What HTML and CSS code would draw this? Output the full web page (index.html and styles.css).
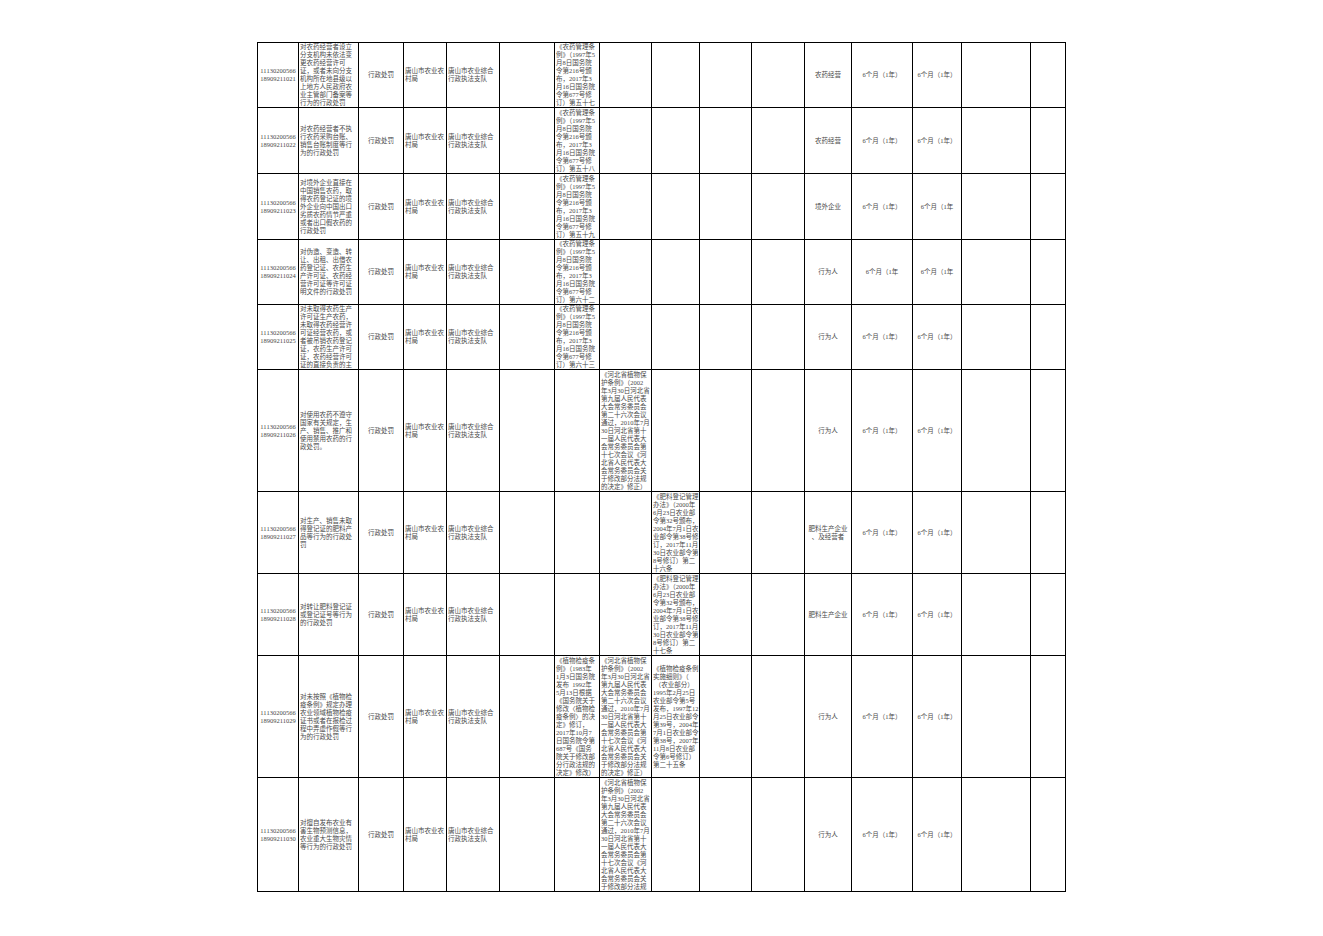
FILE: index.html
```html
<!DOCTYPE html>
<html lang="zh-CN">
<head>
<meta charset="utf-8">
<title>行政处罚事项表</title>
<link rel="stylesheet" href="styles.css">
</head>
<body>
<table class="sheet">
<colgroup>
<col class="w1"><col class="w2"><col class="w3"><col class="w4"><col class="w5"><col class="w6"><col class="w7"><col class="w8"><col class="w9"><col class="w10"><col class="w11"><col class="w12"><col class="w13"><col class="w14"><col class="w15"><col class="w16">
</colgroup>
<tbody>
<tr class="r1">
<td class="m">11130200566<br>18909211021</td>
<td class="l">对农药经营者设立<br>分支机构未依法变<br>更农药经营许可<br>证，或者未向分支<br>机构所在地县级以<br>上地方人民政府农<br>业主管部门备案等<br>行为的行政处罚</td>
<td class="m">行政处罚</td>
<td class="l">唐山市农业农<br>村局</td>
<td class="l">唐山市农业综合<br>行政执法支队</td>
<td></td>
<td class="l">《农药管理条<br>例》（1997年5<br>月8日国务院<br>令第216号颁<br>布，2017年3<br>月16日国务院<br>令第677号修<br>订）第五十七</td>
<td></td><td></td><td></td><td></td>
<td class="m">农药经营</td>
<td class="m">6个月（1年）</td>
<td class="m">6个月（1年）</td>
<td></td><td></td>
</tr>
<tr class="r2">
<td class="m">11130200566<br>18909211022</td>
<td class="l">对农药经营者不执<br>行农药采购台账、<br>销售台账制度等行<br>为的行政处罚</td>
<td class="m">行政处罚</td>
<td class="l">唐山市农业农<br>村局</td>
<td class="l">唐山市农业综合<br>行政执法支队</td>
<td></td>
<td class="l">《农药管理条<br>例》（1997年5<br>月8日国务院<br>令第216号颁<br>布，2017年3<br>月16日国务院<br>令第677号修<br>订）第五十八</td>
<td></td><td></td><td></td><td></td>
<td class="m">农药经营</td>
<td class="m">6个月（1年）</td>
<td class="m">6个月（1年）</td>
<td></td><td></td>
</tr>
<tr class="r3">
<td class="m">11130200566<br>18909211023</td>
<td class="l">对境外企业直接在<br>中国销售农药，取<br>得农药登记证的境<br>外企业向中国出口<br>劣质农药情节严重<br>或者出口假农药的<br>行政处罚</td>
<td class="m">行政处罚</td>
<td class="l">唐山市农业农<br>村局</td>
<td class="l">唐山市农业综合<br>行政执法支队</td>
<td></td>
<td class="l">《农药管理条<br>例》（1997年5<br>月8日国务院<br>令第216号颁<br>布，2017年3<br>月16日国务院<br>令第677号修<br>订）第五十九</td>
<td></td><td></td><td></td><td></td>
<td class="m">境外企业</td>
<td class="m">6个月（1年）</td>
<td class="m">6个月（1年</td>
<td></td><td></td>
</tr>
<tr class="r4">
<td class="m">11130200566<br>18909211024</td>
<td class="l">对伪造、变造、转<br>让、出租、出借农<br>药登记证、农药生<br>产许可证、农药经<br>营许可证等许可证<br>明文件的行政处罚</td>
<td class="m">行政处罚</td>
<td class="l">唐山市农业农<br>村局</td>
<td class="l">唐山市农业综合<br>行政执法支队</td>
<td></td>
<td class="l">《农药管理条<br>例》（1997年5<br>月8日国务院<br>令第216号颁<br>布，2017年3<br>月16日国务院<br>令第677号修<br>订）第六十二</td>
<td></td><td></td><td></td><td></td>
<td class="m">行为人</td>
<td class="m">6个月（1年</td>
<td class="m">6个月（1年</td>
<td></td><td></td>
</tr>
<tr class="r5">
<td class="m">11130200566<br>18909211025</td>
<td class="l">对未取得农药生产<br>许可证生产农药，<br>未取得农药经营许<br>可证经营农药，或<br>者被吊销农药登记<br>证，农药生产许可<br>证，农药经营许可<br>证的直接负责的主</td>
<td class="m">行政处罚</td>
<td class="l">唐山市农业农<br>村局</td>
<td class="l">唐山市农业综合<br>行政执法支队</td>
<td></td>
<td class="l">《农药管理条<br>例》（1997年5<br>月8日国务院<br>令第216号颁<br>布，2017年3<br>月16日国务院<br>令第677号修<br>订）第六十三</td>
<td></td><td></td><td></td><td></td>
<td class="m">行为人</td>
<td class="m">6个月（1年）</td>
<td class="m">6个月（1年）</td>
<td></td><td></td>
</tr>
<tr class="r6">
<td class="m">11130200566<br>18909211026</td>
<td class="l">对使用农药不遵守<br>国家有关规定，生<br>产、销售、推广和<br>使用禁用农药的行<br>政处罚。</td>
<td class="m">行政处罚</td>
<td class="l">唐山市农业农<br>村局</td>
<td class="l">唐山市农业综合<br>行政执法支队</td>
<td></td>
<td></td>
<td class="l">《河北省植物保<br>护条例》（2002<br>年3月30日河北省<br>第九届人民代表<br>大会常务委员会<br>第二十六次会议<br>通过，2010年7月<br>30日河北省第十<br>一届人民代表大<br>会常务委员会第<br>十七次会议《河<br>北省人民代表大<br>会常务委员会关<br>于修改部分法规<br>的决定》修正）</td>
<td></td><td></td><td></td>
<td class="m">行为人</td>
<td class="m">6个月（1年）</td>
<td class="m">6个月（1年）</td>
<td></td><td></td>
</tr>
<tr class="r7">
<td class="m">11130200566<br>18909211027</td>
<td class="l">对生产、销售未取<br>得登记证的肥料产<br>品等行为的行政处<br>罚</td>
<td class="m">行政处罚</td>
<td class="l">唐山市农业农<br>村局</td>
<td class="l">唐山市农业综合<br>行政执法支队</td>
<td></td><td></td><td></td>
<td class="l">《肥料登记管理<br>办法》（2000年<br>6月23日农业部<br>令第32号颁布，<br>2004年7月1日农<br>业部令第38号修<br>订，2017年11月<br>30日农业部令第<br>8号修订）第二<br>十六条</td>
<td></td><td></td>
<td class="m">肥料生产企业<br>、及经营者</td>
<td class="m">6个月（1年）</td>
<td class="m">6个月（1年）</td>
<td></td><td></td>
</tr>
<tr class="r8">
<td class="m">11130200566<br>18909211028</td>
<td class="l">对转让肥料登记证<br>或登记证号等行为<br>的行政处罚</td>
<td class="m">行政处罚</td>
<td class="l">唐山市农业农<br>村局</td>
<td class="l">唐山市农业综合<br>行政执法支队</td>
<td></td><td></td><td></td>
<td class="l">《肥料登记管理<br>办法》（2000年<br>6月23日农业部<br>令第32号颁布，<br>2004年7月1日农<br>业部令第38号修<br>订，2017年11月<br>30日农业部令第<br>8号修订）第二<br>十七条</td>
<td></td><td></td>
<td class="m">肥料生产企业</td>
<td class="m">6个月（1年）</td>
<td class="m">6个月（1年）</td>
<td></td><td></td>
</tr>
<tr class="r9">
<td class="m">11130200566<br>18909211029</td>
<td class="l">对未按照《植物检<br>疫条例》规定办理<br>农业领域植物检疫<br>证书或者在报检过<br>程中弄虚作假等行<br>为的行政处罚</td>
<td class="m">行政处罚</td>
<td class="l">唐山市农业农<br>村局</td>
<td class="l">唐山市农业综合<br>行政执法支队</td>
<td></td>
<td class="l">《植物检疫条<br>例》（1983年<br>1月3日国务院<br>发布&nbsp;&nbsp;1992年<br>5月13日根据<br>《国务院关于<br>修改〈植物检<br>疫条例〉的决<br>定》修订，<br>2017年10月7<br>日国务院令第<br>687号《国务<br>院关于修改部<br>分行政法规的<br>决定》修改）</td>
<td class="l">《河北省植物保<br>护条例》（2002<br>年3月30日河北省<br>第九届人民代表<br>大会常务委员会<br>第二十六次会议<br>通过，2010年7月<br>30日河北省第十<br>一届人民代表大<br>会常务委员会第<br>十七次会议《河<br>北省人民代表大<br>会常务委员会关<br>于修改部分法规<br>的决定》修正）</td>
<td class="l">《植物检疫条例<br>实施细则》（<br>&nbsp;（农业部分）<br>1995年2月25日<br>农业部令第5号<br>发布，1997年12<br>月25日农业部令<br>第39号，2004年<br>7月1日农业部令<br>第38号，2007年<br>11月8日农业部<br>令第6号修订）<br>第二十五条</td>
<td></td><td></td>
<td class="m">行为人</td>
<td class="m">6个月（1年）</td>
<td class="m">6个月（1年）</td>
<td></td><td></td>
</tr>
<tr class="r10">
<td class="m">11130200566<br>18909211030</td>
<td class="l">对擅自发布农业有<br>害生物预测信息，<br>农业重大生物灾情<br>等行为的行政处罚</td>
<td class="m">行政处罚</td>
<td class="l">唐山市农业农<br>村局</td>
<td class="l">唐山市农业综合<br>行政执法支队</td>
<td></td>
<td></td>
<td class="l">《河北省植物保<br>护条例》（2002<br>年3月30日河北省<br>第九届人民代表<br>大会常务委员会<br>第二十六次会议<br>通过，2010年7月<br>30日河北省第十<br>一届人民代表大<br>会常务委员会第<br>十七次会议《河<br>北省人民代表大<br>会常务委员会关<br>于修改部分法规</td>
<td></td><td></td><td></td>
<td class="m">行为人</td>
<td class="m">6个月（1年）</td>
<td class="m">6个月（1年）</td>
<td></td><td></td>
</tr>
</tbody>
</table>
</body>
</html>
```
FILE: styles.css
```css
html, body {
  margin: 0;
  padding: 0;
  background: #fff;
}
body {
  padding-top: 42px;
  font-family: "Liberation Serif", "Noto Sans CJK SC", serif;
  font-size: 6.5px;
  line-height: 8px;
  color: #4a4a4a;
}
.sheet {
  border-collapse: collapse;
  table-layout: fixed;
  width: 808px;
  margin: 0 auto;
}
.sheet td {
  border: 1px solid #000;
  padding: 0 1px;
  vertical-align: middle;
  white-space: nowrap;
  overflow: hidden;
}
.l { text-align: left; }
.m { text-align: center; }

.w1 { width: 41px; }
.w2 { width: 60px; }
.w3 { width: 45px; }
.w4 { width: 43px; }
.w5 { width: 53px; }
.w6 { width: 55px; }
.w7 { width: 45px; }
.w8 { width: 52px; }
.w9 { width: 48px; }
.w10 { width: 52px; }
.w11 { width: 53px; }
.w12 { width: 47px; }
.w13 { width: 61px; }
.w14 { width: 49px; }
.w15 { width: 69px; }
.w16 { width: 35px; }

.r1 { height: 64px; }
.r2 { height: 66px; }
.r3 { height: 66px; }
.r4 { height: 65px; }
.r5 { height: 65px; }
.r6 { height: 122px; }
.r7 { height: 82px; }
.r8 { height: 82px; }
.r9 { height: 122px; }
.r10 { height: 114px; }
```
